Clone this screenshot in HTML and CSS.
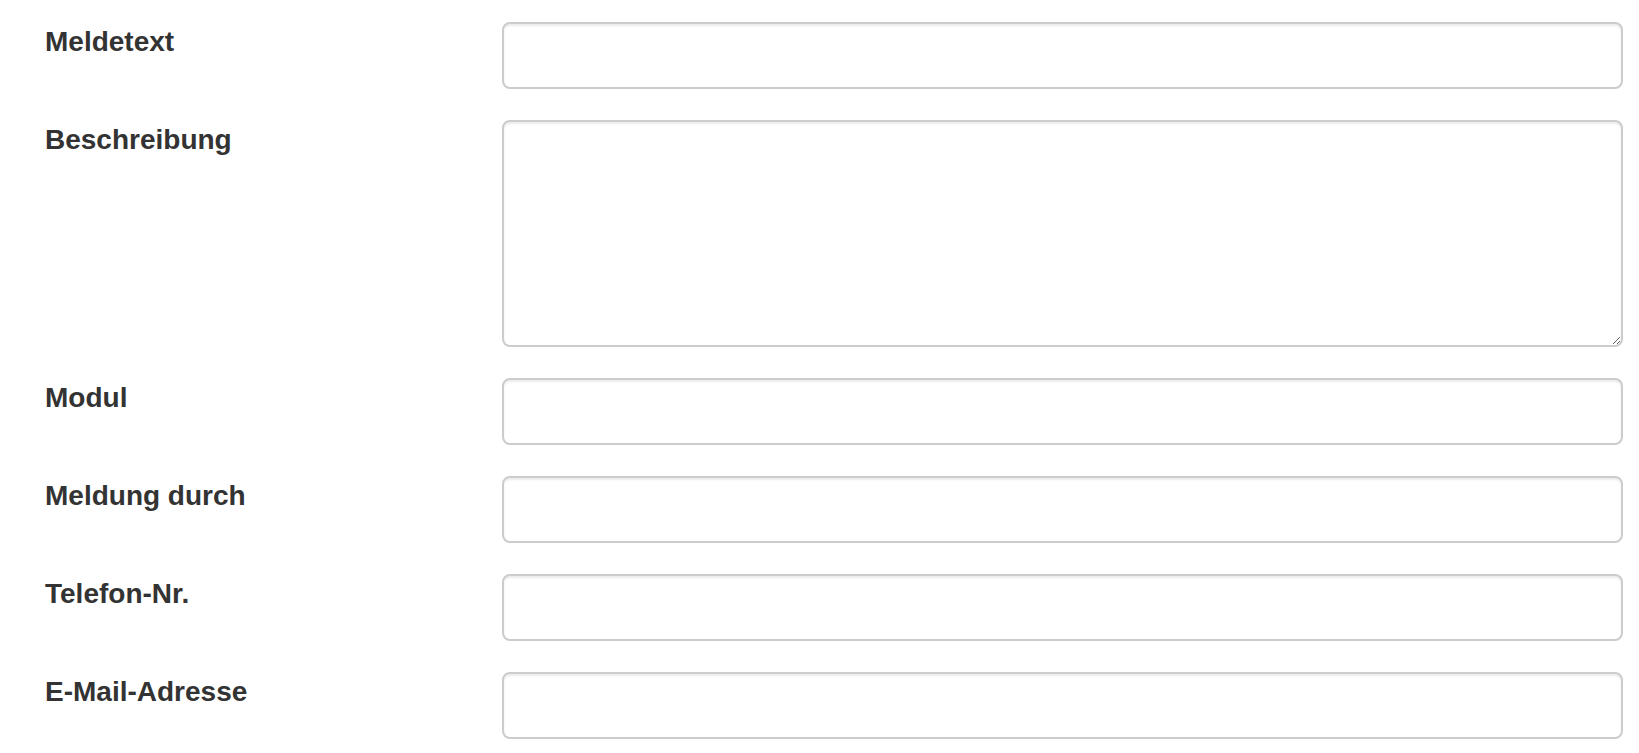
FILE: index.html
```html
<!DOCTYPE html>
<html lang="de">
    <head>
        <meta charset="UTF-8" />
        <title>Meldung</title>
        <link rel="stylesheet" href="styles.css">
    </head>
    <body>
        <form id="report" class="report-form">
            <div class="form-row">
                <label for="meldetext">Meldetext</label>
                <input id="meldetext" type="text" />
            </div>
            <div class="form-row">
                <label for="beschreibung">Beschreibung</label>
                <textarea id="beschreibung"></textarea>
            </div>
            <div class="form-row">
                <label for="modul">Modul</label>
                <input id="modul" type="text" />
            </div>
            <div class="form-row">
                <label for="meldung">Meldung durch</label>
                <input id="meldung" type="text" />
            </div>
            <div class="form-row">
                <label for="telefon">Telefon-Nr.</label>
                <input id="telefon" type="text" />
            </div>
            <div class="form-row">
                <label for="email">E-Mail-Adresse</label>
                <input id="email" type="email" />
            </div>
        </form>
    </body>
</html>
```

FILE: styles.css
```css
html, body {
    margin: 0;
    padding: 0;
    background-color: #ffffff;
}

    .report-form {
        padding: 22px 16px 0 45px;
        display: flex;
        flex-direction: column;
        gap: 31px;
    }

    .form-row {
        display: grid;
        grid-template-columns: 457px 1fr;
        align-items: start;
    }

    .form-row label {
        font-family: 'Liberation Sans', Arial, sans-serif;
        font-weight: bold;
        font-size: 28px;
        line-height: 1.2;
        padding-top: 3px;
        color: #333333;
    }

    .form-row input,
    .form-row textarea {
        box-sizing: border-box;
        display: block;
        width: 100%;
        height: 67px;
        margin: 0;
        padding: 12px 24px;
        font-family: 'Liberation Sans', Arial, sans-serif;
        font-size: 28px;
        color: #555555;
        background-color: #ffffff;
        border: 2px solid #cccccc;
        border-radius: 8px;
        box-shadow: inset 0 2px 2px rgba(0,0,0,0.075);
        outline: none;
    }

    .form-row textarea {
        height: 227px;
        resize: vertical;
    }
```
